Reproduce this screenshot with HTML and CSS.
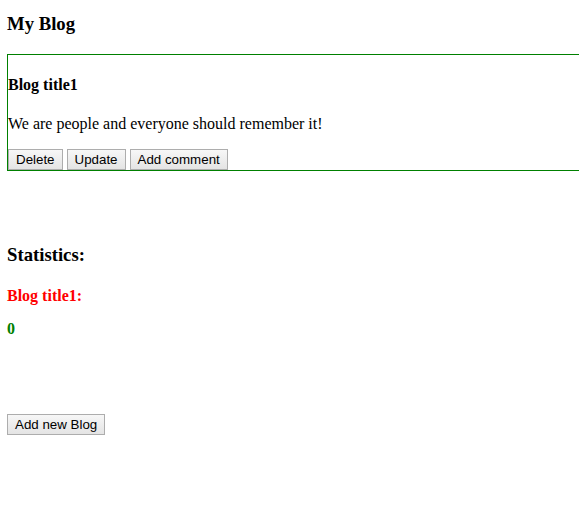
FILE: index.html
```html
<!DOCTYPE html>
<html>
<head>
<meta charset="utf-8">
<link rel="stylesheet" href="styles.css">
</head>
<body>
<div class="app">
  <h3 class="title">My Blog</h3>
  <div class="blog">
    <h4 class="blog-title">Blog title1</h4>
    <p class="blog-text">We are people and everyone should remember it!</p>
    <div class="actions">
      <button class="btn">Delete</button>
      <button class="btn">Update</button>
      <button class="btn">Add comment</button>
    </div>
  </div>
  <h3 class="stats-title">Statistics:</h3>
  <h4 class="stat-name">Blog title1:</h4>
  <h4 class="stat-value">0</h4>
  <div class="footer">
    <button class="btn">Add new Blog</button>
  </div>
</div>
</body>
</html>
```

FILE: styles.css
```css
body {
  margin: 0;
  font-family: "Liberation Serif", "Times New Roman", serif;
  font-size: 16px;
  color: #000;
  background: #fff;
}
.app {
  padding: 13px 0 0 7px;
  overflow: hidden;
}
.title {
  margin: 0 0 18.72px 0;
  font-size: 18.72px;
  font-weight: bold;
}
.blog {
  border: 1px solid green;
  border-right: none;
  margin-right: -2px;
}
.blog-title {
  margin: 21.28px 0;
  font-size: 16px;
}
.blog-text {
  margin: 0 0 16px 0;
}
.actions {
  display: flex;
  gap: 4px;
  height: 21px;
  align-items: flex-start;
}
.btn {
  font-family: "Liberation Sans", Arial, sans-serif;
  font-size: 13.33px;
  height: 21px;
  padding: 0 7px;
  border: 1px solid #adadad;
  border-radius: 0;
  background: linear-gradient(#f7f7f7, #e4e4e4);
  color: #000;
  line-height: 19px;
  margin: 0;
}
.stats-title {
  margin: 72.4px 0 0 0;
  font-size: 18.72px;
}
.stat-name {
  margin: 21.28px 0 0 0;
  color: #ff0000;
  font-size: 16px;
}
.stat-value {
  margin: 15px 0 0 0;
  color: green;
  font-size: 16px;
}
.footer {
  margin-top: 76.3px;
  padding-bottom: 20px;
}
```
